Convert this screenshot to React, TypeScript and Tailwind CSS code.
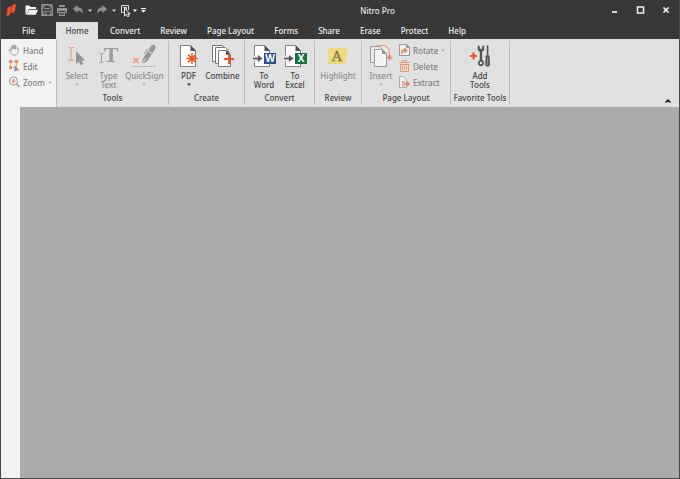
import type { ReactNode } from 'react';

const TABS = ['Convert', 'Review', 'Page Layout', 'Forms', 'Share', 'Erase', 'Protect', 'Help'];

export default function App() {
  return (
    <div className="flex h-screen flex-col border border-t-0 border-[#4a4a4a] bg-[#383838] font-['Noto_Sans','Open_Sans',sans-serif] text-[8px] leading-[9px] font-medium">
      <TitleBar />
      <TabBar />
      <Ribbon />
      <main className="flex min-h-0 flex-1">
        <aside className="w-[19px] bg-[#f2f2f2]" />
        <div className="flex-1 bg-[#ababab]" />
      </main>
    </div>
  );
}

function TitleBar() {
  return (
    <header className="flex h-[22px] shrink-0 items-center pb-[2px] text-[#e8e8e8]">
      <div className="flex items-center pl-1">
        <NitroLogo />
        <button type="button" aria-label="Open" className="ml-2">
          <svg width="13" height="12" viewBox="0 0 13 12" fill="#f4f4f4">
            <path d="M.5 10.5v-9h4L5.500 3H11v2H4L1.600 10.500z" />
            <path d="M4.200 5.700H13l-2.300 5H1.700z" />
          </svg>
        </button>
        <button type="button" aria-label="Save" className="ml-[3px]">
          <svg width="12" height="12" viewBox="0 0 12 12" fill="none" stroke="#949494">
            <path d="M1 .8h9l1.300 1.300v9.200H1z" strokeWidth="1.500" />
            <path d="M3 1v3.500h6V1M2.800 11V7.200h6.700V11M5 8v3" />
          </svg>
        </button>
        <button type="button" aria-label="Print" className="ml-[3px]">
          <svg width="12" height="12" viewBox="0 0 12 12" fill="#929292">
            <path d="M3 1h6v2H3zM1 4h10v5H9.500V7h-7v2H1zM3 8h6v4H3z" />
            <path d="M4 9h4v2H4z" fill="#555" />
          </svg>
        </button>
        <button type="button" aria-label="Undo" className="ml-1">
          <UndoIcon />
        </button>
        <button type="button" aria-label="Undo history" className="ml-1">
          <Caret className="text-[#ccc]" />
        </button>
        <button type="button" aria-label="Redo" className="ml-1">
          <UndoIcon className="-scale-x-100" />
        </button>
        <button type="button" aria-label="Redo history" className="ml-1">
          <Caret className="text-[#ccc]" />
        </button>
        <button type="button" aria-label="Select tool" className="ml-1">
          <svg width="13" height="13" viewBox="0 0 13 13" fill="none">
            <path d="M4 8.500H1.500v-7h7V6M3.500 3.500h3v3" stroke="#ddd" />
            <path d="M4.500 4v8l1.800-1.600 1.200 2.400 1.600-.7-1.200-2.300h2.300z" fill="#444" stroke="#fff" strokeWidth=".9" />
          </svg>
        </button>
        <button type="button" aria-label="Tool options">
          <Caret className="text-white" />
        </button>
        <button type="button" aria-label="Customize toolbar" className="ml-1">
          <svg width="5" height="6" viewBox="0 0 5 6" fill="#fff">
            <path d="M0 1h5v1H0zM0 3h5L2.500 5.500z" />
          </svg>
        </button>
      </div>
      <h1 className="flex-1 text-center">Nitro Pro</h1>
      <div className="flex items-center gap-4 pr-2">
        <button type="button" aria-label="Minimize">
          <svg width="10" height="10" viewBox="0 0 10 10">
            <path d="M3 7h5" stroke="#fff" strokeWidth="1.600" />
          </svg>
        </button>
        <button type="button" aria-label="Maximize">
          <svg width="10" height="10" viewBox="0 0 10 10" fill="none">
            <path d="M2.500 2h6v6h-6z" stroke="#eee" strokeWidth="1.500" />
          </svg>
        </button>
        <button type="button" aria-label="Close">
          <svg width="10" height="10" viewBox="0 0 10 10">
            <path d="M2.500 2.500l5 5M7.500 2.500l-5 5" stroke="#fff" strokeWidth="1.600" />
          </svg>
        </button>
      </div>
    </header>
  );
}

function TabBar() {
  return (
    <nav className="flex h-[17px] shrink-0 text-[#eee]">
      <button type="button" className="w-[55px]">
        File
      </button>
      <button type="button" className="mr-[2px] w-[42px] bg-[#e1e1e1] text-[#444]">
        Home
      </button>
      {TABS.map((tab) => (
        <button key={tab} type="button" className="px-[10px]">
          {tab}
        </button>
      ))}
    </nav>
  );
}

function Ribbon() {
  return (
    <section className="flex h-[68px] shrink-0 bg-[#e1e1e1] text-[#444]">
      <div className="flex w-[55px] flex-col gap-1 bg-[#f2f2f2] pt-[5px] pl-[7px]">
        <SmallTool label="Hand" icon={<HandIcon />} />
        <SmallTool label="Edit" icon={<EditIcon />} />
        <SmallTool label="Zoom" icon={<ZoomIcon />} caret />
      </div>
      <Group label="Tools" className="w-[113px] border-l border-l-[#bbb]">
        <Tool label="Select" icon={<SelectIcon />} className="w-10" disabled caret />
        <Tool label="Type Text" icon={<TypeIcon />} className="w-6" disabled />
        <Tool label="QuickSign" icon={<SignIcon />} className="w-12" disabled caret />
      </Group>
      <Group label="Create" className="w-[76px]">
        <Tool label="PDF" icon={<PdfIcon />} className="w-8" caret />
        <Tool label="Combine" icon={<CombineIcon />} className="w-9" />
      </Group>
      <Group label="Convert" className="w-[70px]">
        <Tool label="To Word" icon={<OfficeIcon letter="W" color="#25509b" />} className="w-[31px] px-[3px]" />
        <Tool label="To Excel" icon={<OfficeIcon letter="X" color="#16753f" />} className="w-[31px] px-[3px]" />
      </Group>
      <Group label="Review" className="w-[47px]">
        <Tool label="Highlight" icon={<HighlightIcon />} className="w-10" disabled />
      </Group>
      <Group label="Page Layout" className="w-[89px]">
        <Tool label="Insert" icon={<InsertIcon />} className="w-8" disabled caret />
        <div className="flex w-[50px] flex-col gap-1 pl-[2px]">
          <SmallTool label="Rotate" icon={<RotateIcon />} caret />
          <SmallTool label="Delete" icon={<TrashIcon />} />
          <SmallTool label="Extract" icon={<ExtractIcon />} />
        </div>
      </Group>
      <Group label="Favorite Tools" className="w-[59px]">
        <Tool label="Add Tools" icon={<AddToolsIcon />} className="w-8" />
      </Group>
      <div className="flex flex-1 items-end justify-end pr-2 pb-1">
        <button type="button" aria-label="Collapse ribbon">
          <svg width="6" height="4" viewBox="0 0 6 4" fill="none" stroke="#222" strokeWidth="1.500">
            <path d="M.5 3.500L3 1l2.500 2.500" />
          </svg>
        </button>
      </div>
    </section>
  );
}

function Group({ label, className, children }: { label: string; className: string; children: ReactNode }) {
  return (
    <div className={`flex shrink-0 py-[2px] ${className}`}>
      <div className="flex min-w-0 flex-1 flex-col border-r border-[#bdbdbd] pt-[3px]">
        <div className="flex h-[49px] justify-center">{children}</div>
        <div className="flex justify-center whitespace-nowrap">{label}</div>
      </div>
    </div>
  );
}

interface ToolProps {
  label: string;
  icon: ReactNode;
  className: string;
  disabled?: boolean;
  caret?: boolean;
}

function Tool({ label, icon, className, disabled, caret }: ToolProps) {
  return (
    <button
      type="button"
      disabled={disabled}
      className={`flex flex-col items-center disabled:text-[#8c8c8c] ${className}`}
    >
      <span className="flex h-[27px]">{icon}</span>
      <span>{label}</span>
      {caret && <Caret className={disabled ? 'mt-[3px] text-[#b5b5b5]' : 'mt-[3px] text-[#333]'} />}
    </button>
  );
}

function SmallTool({ label, icon, caret }: { label: string; icon: ReactNode; caret?: boolean }) {
  return (
    <button type="button" disabled className="flex h-3 items-center text-[#7e7e7e]">
      {icon}
      <span className="ml-[3px]">{label}</span>
      {caret && <Caret className="ml-[3px] text-[#b5b5b5]" />}
    </button>
  );
}

// Icons
function Caret({ className = '' }: { className?: string }) {
  return (
    <svg className={`shrink-0 ${className}`} width="4" height="3" viewBox="0 0 4 3" fill="currentColor">
      <path d="M0 .5h4L2 3z" />
    </svg>
  );
}

function NitroLogo() {
  return (
    <svg width="12" height="14" viewBox="0 0 12 14" fill="#f4511e">
      <path d="M2.300 6.500C2.600 4.500 4.300 3.500 6.400 3.200L5.700 9.700C5.500 11.500 3.700 12.700 1.600 13z" />
      <path d="M6.900 4c.3-2 1.700-3 3.900-3.300L10.100 7c-.3 2-1.800 3-3.900 3.300z" />
    </svg>
  );
}

function UndoIcon({ className = '' }: { className?: string }) {
  return (
    <svg className={className} width="12" height="12" viewBox="0 0 12 12" fill="#8e8e8e">
      <path d="M.8 5L5.500 1v2.300c3.500 0 5.500 2.600 5.500 7C9.800 7.700 8.300 6.800 5.500 6.800V9z" />
    </svg>
  );
}

function HandIcon() {
  return (
    <svg width="12" height="12" viewBox="0 0 12 12" fill="none" stroke="#949494" strokeWidth=".8">
      <path d="M3.400 7.200V2.600c0-.9 1.300-.9 1.400 0V5 1.500c0-.9 1.300-.9 1.400 0V5 1.800c.1-.9 1.400-.9 1.400 0v3.400-2c.1-.9 1.600-.9 1.600.1L9 5.200c.4-.9 1.800-.7 1.600.3C10 8.800 8.800 11.300 6.400 11.300 3.600 11.300 3 9 1.200 6.400c-.6-1 .6-1.500 1.200-.7z" />
    </svg>
  );
}

function EditIcon() {
  return (
    <svg width="12" height="12" viewBox="0 0 12 12" fill="none">
      <path d="M2.500 1.500h6v6h-6z" stroke="#f3a78d" />
      <path d="M1 0h3v3H1zM7 0h3v3H7zM1 6h3v3H1z" fill="#f08a63" />
      <path d="M6.500 5v7l1.700-1.500h3z" fill="#888" />
    </svg>
  );
}

function ZoomIcon() {
  return (
    <svg width="12" height="12" viewBox="0 0 12 12" fill="none">
      <circle cx="5.500" cy="5" r="4" stroke="#999" />
      <path d="M8.500 8l3 3" stroke="#999" strokeWidth="1.600" />
      <path d="M3.500 5h4M5.500 3v4" stroke="#ee7b53" strokeWidth="1.200" />
    </svg>
  );
}

function SelectIcon() {
  return (
    <svg width="20" height="24" viewBox="0 0 20 24">
      <path d="M1 3.500h2l1 .8 1-.8h2M4 4v12M1 16.500h2l1-.8 1 .8h2" fill="none" stroke="#eb9c81" />
      <path d="M9 7v13l2.900-2.300 1.800 3.500 2.600-1.300-1.700-3.400h3.700z" fill="#969696" />
    </svg>
  );
}

function TypeIcon() {
  return (
    <svg className="overflow-visible" width="20" height="24" viewBox="0 0 20 24">
      <text x="12" y="18" textAnchor="middle" fontFamily="Liberation Serif, serif" fontSize="22" fontWeight="700" fill="#9c9c9c">
        T
      </text>
      <path d="M.5 9.500h1.300l.7.700.7-.7h1.300M2.500 10v8M.5 18.500h1.300l.7-.7.7.7h1.300" fill="none" stroke="#999" />
    </svg>
  );
}

function SignIcon() {
  return (
    <svg width="24" height="24" viewBox="0 0 24 24">
      <path d="M22.500 1.200c1.700 1.100 1.300 2.800.2 4.500L15.800 16.300c-1.200 1.700-3.400 2.700-5.400 3.200-.3-2.200.1-4.200 1.200-6.100L18.500 3c1.100-1.800 2.500-2.700 4-1.800z" fill="#969696" />
      <path d="M16 7l4 2.500M11 18.500l3-4.500" stroke="#ddd" fill="none" />
      <path d="M15.800 4.500L12 10" stroke="#969696" fill="none" />
      <path d="M1.500 14l5 5M6.500 14l-5 5" stroke="#eb9a7c" strokeWidth="1.700" />
      <path d="M0 22.500h23" stroke="#aaa" strokeDasharray="2 1" />
    </svg>
  );
}

function Page() {
  return (
    <>
      <path d="M1.500 1.500h10l5 5v16h-15z" fill="#fff" stroke="#808080" />
      <path d="M11.500 1v6H17z" fill="#505050" />
    </>
  );
}

function PdfIcon() {
  return (
    <svg width="19" height="24" viewBox="0 0 19 24">
      <Page />
      <path d="M13 9v11M7.500 14.500h11M9.100 10.600l7.800 7.800M16.900 10.600l-7.800 7.800" stroke="#f05323" strokeWidth="1.500" />
    </svg>
  );
}

function CombineIcon() {
  return (
    <svg width="22" height="24" viewBox="0 0 22 24">
      <path d="M.5 1.500h10l3 3v13H.5z" fill="#fff" stroke="#777" />
      <path d="M3.500 3.500h10l3 3v13h-13z" fill="#fff" stroke="#777" />
      <path d="M6.500 6.500h8l4 4v12h-12z" fill="#fff" stroke="#777" />
      <path d="M14 6v4.800h4.700z" fill="#505050" />
      <path d="M17 10v10M12 15h10" stroke="#f05323" strokeWidth="2" />
    </svg>
  );
}

function OfficeIcon({ letter, color }: { letter: string; color: string }) {
  return (
    <svg width="23" height="24" viewBox="0 0 23 24">
      <Page />
      <path d="M0 11.500h5v6H0z" fill="#e1e1e1" />
      <path d="M0 14.500h7" stroke="#555" strokeWidth="1.600" />
      <path d="M5 11l4.500 3.500L5 18z" fill="#555" />
      <path d="M11 9h12v11H11z" fill={color} />
      <text x="17" y="18" textAnchor="middle" fontFamily="Open Sans, sans-serif" fontSize="10" fontWeight="700" fill="#fff">
        {letter}
      </text>
    </svg>
  );
}

function HighlightIcon() {
  return (
    <svg width="22" height="24" viewBox="0 0 22 24">
      <path d="M1 4h20l-3 16H1z" fill="#efd978" />
      <text x="10" y="17" textAnchor="middle" fontFamily="Liberation Serif, serif" fontSize="15" fontWeight="400" fill="#7d7655" stroke="#7d7655" strokeWidth=".3">
        A
      </text>
    </svg>
  );
}

function InsertIcon() {
  return (
    <svg width="24" height="24" viewBox="0 0 24 24" fill="#e8e8e8">
      <path d="M8 1.500h8l4 4v8H8z" stroke="#ed9b81" strokeWidth="1.200" />
      <path d="M1.500 2.500h9l3 3v13h-12z" stroke="#999" />
      <path d="M5.500 5.500h8l4 4v13h-12z" fill="#f4f4f4" stroke="#999" />
      <path d="M13 5v5h5z" fill="#999" />
      <path d="M23.500 13.500H19M21.500 11L19 13.500l2.500 2.500" fill="none" stroke="#ea805c" strokeWidth="1.600" />
    </svg>
  );
}

function RotateIcon() {
  return (
    <svg width="11" height="12" viewBox="0 0 11 12" fill="none">
      <path d="M.5.5h7l3 3v8H.5z" fill="#f0f0f0" stroke="#999" />
      <path d="M7 0v4h4z" fill="#999" />
      <path d="M3 10V6.500h4M5.400 4.300l2.200 2.200-2.200 2.200" stroke="#eb7c58" strokeWidth="1.400" />
    </svg>
  );
}

function TrashIcon() {
  return (
    <svg width="11" height="12" viewBox="0 0 11 12" fill="none" stroke="#ec9474">
      <path d="M0 2.500h11M3.500 2V.5h4V2M.5 4.500h10M1.500 4.500v7h8v-7M3.500 5.500V10M5.500 5.500V10M7.500 5.500V10" />
    </svg>
  );
}

function ExtractIcon() {
  return (
    <svg width="11" height="12" viewBox="0 0 11 12" fill="none">
      <path d="M.5.500h4l3 3v8h-7z" fill="#f0f0f0" stroke="#aaa" />
      <path d="M3 5h3v5.500H3z" fill="#edad94" />
      <path d="M6 8h4M8.200 6l2 2-2 2" stroke="#eb7c58" strokeWidth="1.300" />
    </svg>
  );
}

function AddToolsIcon() {
  return (
    <svg width="20" height="24" viewBox="0 0 20 24">
      <path d="M3.500 8.500v7M0 12h7" stroke="#f05323" strokeWidth="2.200" />
      <path d="M8 1.500v4.500l2 2v8c-3 1.500-2.200 6 1 6s4-4.500 1-6V8l2-2V1.500l-1.700 1v2.500H9.700V2.500z" fill="#555" stroke="#555" strokeWidth=".4" />
      <circle cx="11" cy="19" r="1.300" fill="#e1e1e1" />
      <path d="M16.800 1.500h1.600v10h1.200v2H19l.8 1v7l-1 1h-2.400l-1-1v-7l.8-1h-.6v-2h1.200z" fill="#555" />
      <path d="M17.600 14.500v6.500" stroke="#bbb" strokeWidth=".7" />
    </svg>
  );
}
